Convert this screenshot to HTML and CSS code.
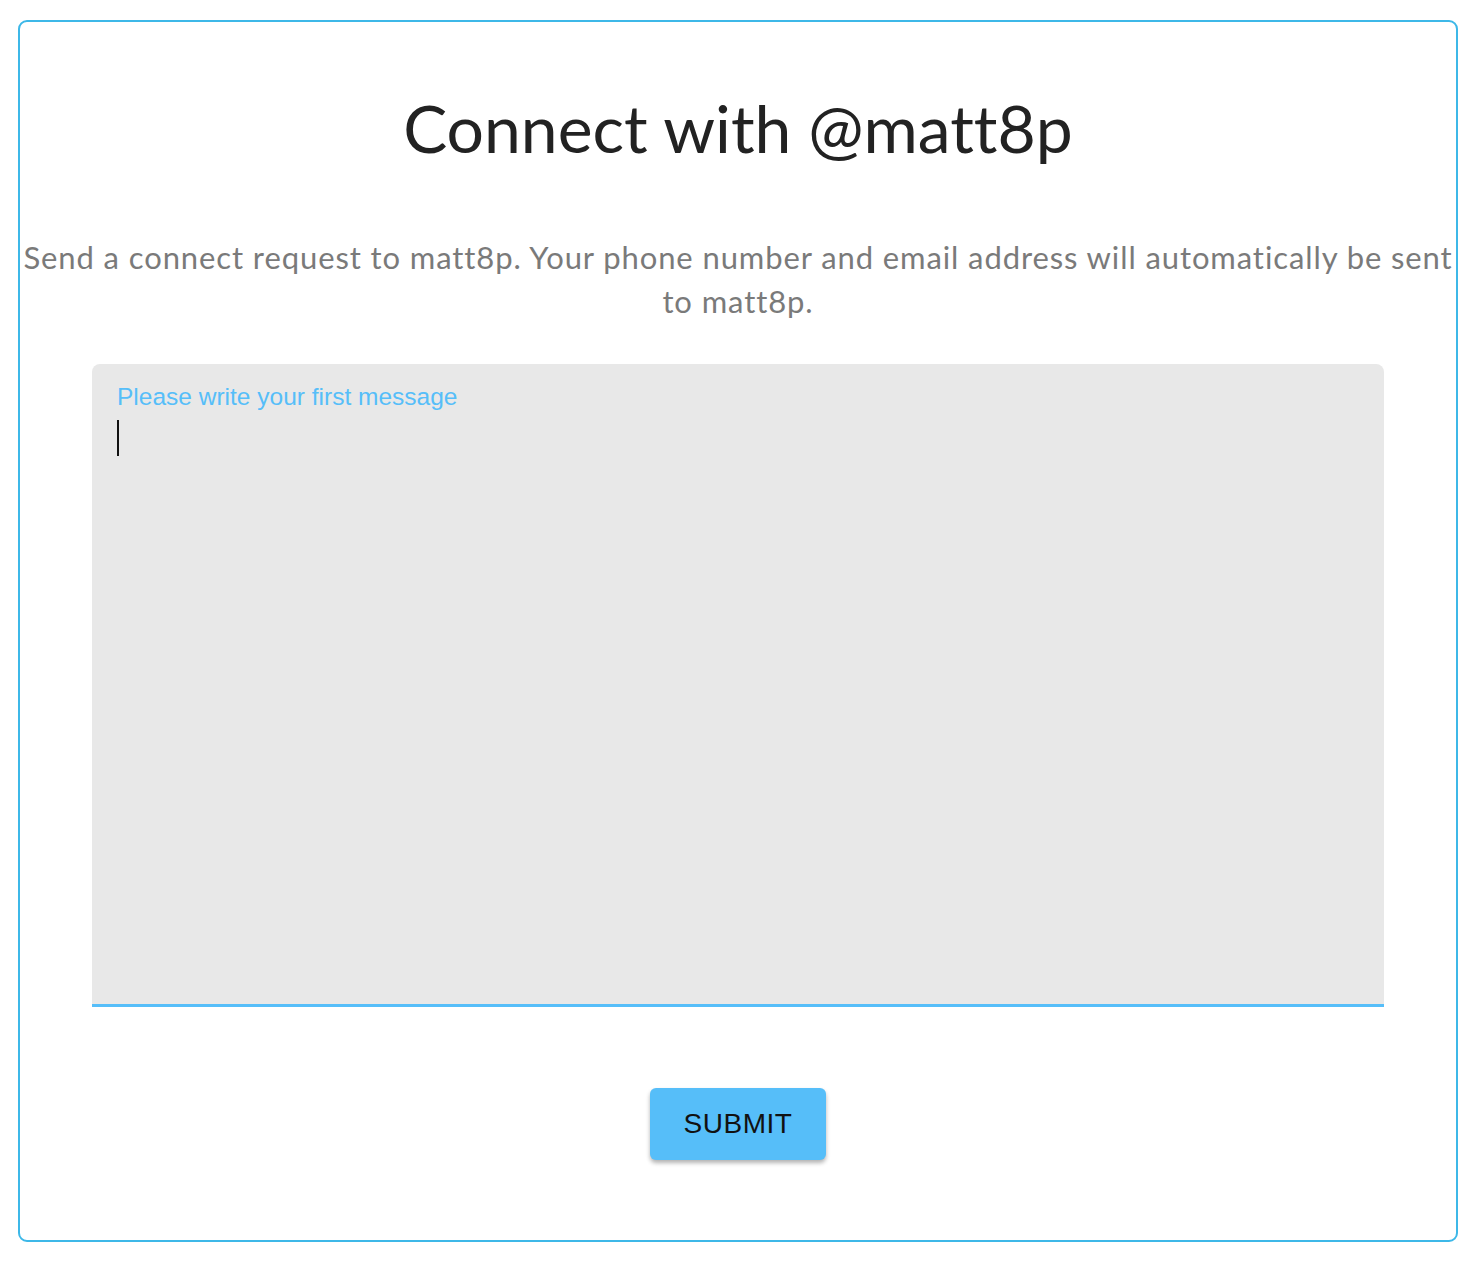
FILE: index.html
```html
<!DOCTYPE html>
<html>
<head>
<meta charset="utf-8">
<link rel="stylesheet" href="styles.css">
</head>
<body>
<div class="card">
  <h1 class="title">Connect with @matt8p</h1>
  <p class="subtitle">Send a connect request to matt8p. Your phone number and email address will automatically be sent to matt8p.</p>
  <div class="field">
    <label class="label">Please write your first message</label>
    <div class="cursor"></div>
  </div>
  <div class="actions">
    <button class="submit">SUBMIT</button>
  </div>
</div>
</body>
</html>
```

FILE: styles.css
```css
html, body {
  margin: 0;
  padding: 0;
  background: #fff;
}
body {
  padding: 20px 18px;
}
.card {
  box-sizing: border-box;
  width: 1440px;
  height: 1222px;
  border: 2px solid #3db8e8;
  border-radius: 9px;
  display: flex;
  flex-direction: column;
  align-items: center;
  font-family: Lato, "Noto Sans", sans-serif;
  font-variant-ligatures: none;
}
.title {
  margin: 64px 0 0;
  font-size: 66px;
  font-weight: 400;
  line-height: 84px;
  color: #222;
}
.subtitle {
  margin: 65px 0 0;
  font-size: 31px;
  letter-spacing: 0.9px;
  line-height: 44px;
  color: #7a7a7a;
  text-align: center;
}
.field {
  box-sizing: border-box;
  margin-top: 41px;
  width: 1292px;
  height: 643px;
  background: #e8e8e8;
  border-radius: 8px 8px 0 0;
  border-bottom: 3px solid #56bef9;
  padding: 20px 25px;
  font-family: "Liberation Sans", Arial, sans-serif;
}
.label {
  display: block;
  color: #56bef9;
  font-size: 24.5px;
  line-height: 26px;
}
.cursor {
  margin-top: 10px;
  width: 2px;
  height: 36px;
  background: #111;
}
.actions {
  margin-top: 81px;
}
.submit {
  width: 176px;
  height: 72px;
  border: none;
  border-radius: 6px;
  background: #56bef9;
  color: #111;
  font-family: "Liberation Sans", Arial, sans-serif;
  font-size: 28px;
  letter-spacing: 0.5px;
  box-shadow: 0 3px 4px rgba(0,0,0,0.3);
}
```
